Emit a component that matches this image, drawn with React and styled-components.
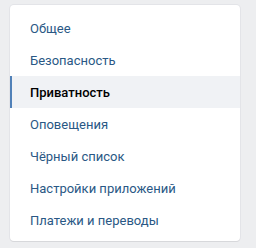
import React from "react";
import styled, { createGlobalStyle } from "styled-components";

const Global = createGlobalStyle`
  html, body { margin: 0; padding: 0; background: #edeef0; }
  body { font-family: Roboto, "Open Sans", "DejaVu Sans", sans-serif; }
`;

const Page = styled.div`
  padding: 5px 16px 0 10px;
  width: 256px;
  height: 248px;
  box-sizing: border-box;
`;

const Menu = styled.nav`
  width: 230px;
  background: #fff;
  border-radius: 4px;
  box-shadow: 0 1px 0 0 #d7d8db, 0 0 0 1px #e3e4e8;
  padding: 7px 0 5px;
  display: flex;
  flex-direction: column;
`;

const Item = styled.a`
  display: flex;
  align-items: center;
  height: 32px;
  padding-left: ${(p) => (p.$selected ? "18px" : "20px")};
  border-left: ${(p) => (p.$selected ? "2px solid #5181b8" : "none")};
  background: ${(p) => (p.$selected ? "#f0f2f5" : "transparent")};
  color: ${(p) => (p.$selected ? "#000" : "#2a5885")};
  font-size: 13px;
  font-weight: ${(p) => (p.$selected ? 500 : 400)};
  text-decoration: none;
  cursor: pointer;
`;

const items = [
  "Общее",
  "Безопасность",
  "Приватность",
  "Оповещения",
  "Чёрный список",
  "Настройки приложений",
  "Платежи и переводы",
];

export default function App() {
  return (
    <>
      <Global />
      <Page>
        <Menu>
          {items.map((t) => (
            <Item key={t} $selected={t === "Приватность"}>
              {t}
            </Item>
          ))}
        </Menu>
      </Page>
    </>
  );
}
